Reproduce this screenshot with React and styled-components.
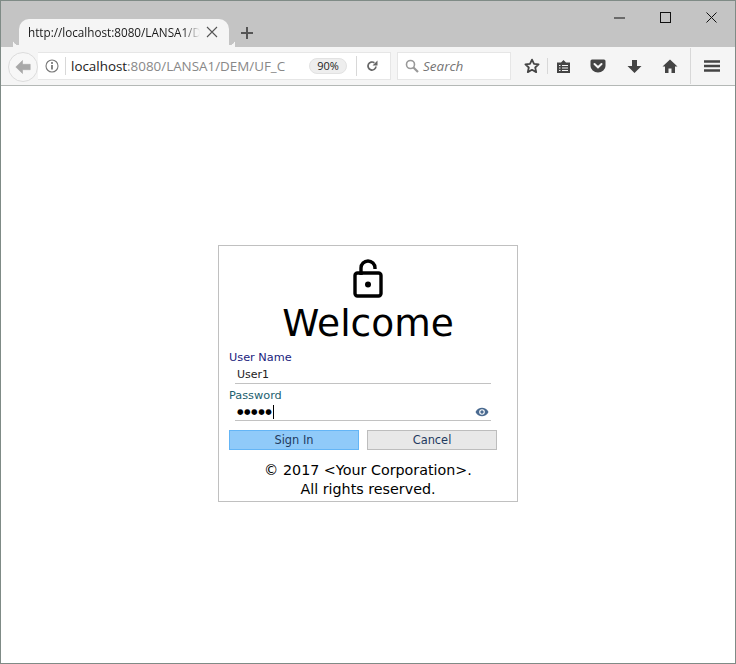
import React from "react";
import styled, { createGlobalStyle } from "styled-components";

const Global = createGlobalStyle`
  html, body {
    margin: 0;
    padding: 0;
    background: #fff;
  }
`;

const Frame = styled.div`
  width: 736px;
  height: 664px;
  box-sizing: border-box;
  border: 1px solid #7f8b86;
  display: flex;
  flex-direction: column;
  overflow: hidden;
  font-family: "DejaVu Sans", Verdana, sans-serif;
`;

const TitleBar = styled.div`
  height: 46px;
  flex: none;
  background: #c4c4c4;
  display: flex;
  align-items: flex-end;
  padding-left: 18px;
  position: relative;
`;

const Tab = styled.div`
  width: 210px;
  height: 28px;
  box-sizing: border-box;
  background: #f5f5f5;
  border-radius: 10px 10px 0 0;
  padding: 0 11px 2px 9px;
  display: flex;
  align-items: center;
  justify-content: space-between;
  position: relative;
  font-family: "Open Sans", sans-serif;
  font-size: 11.7px;
  color: #1a1a1a;

  &::before,
  &::after {
    content: "";
    position: absolute;
    bottom: 0;
    width: 6px;
    height: 8px;
    background: radial-gradient(circle at 0 0, #c4c4c4 6px, #f5f5f5 6.5px);
  }
  &::before {
    left: -6px;
    transform: scaleX(-1);
  }
  &::after {
    right: -6px;
  }
`;

const TabTitle = styled.span`
  width: 176px;
  white-space: nowrap;
  -webkit-mask-image: linear-gradient(to right, #000 155px, transparent 172px);
  mask-image: linear-gradient(to right, #000 155px, transparent 172px);
`;

const NewTab = styled.div`
  margin: 0 0 7px 11px;
  height: 14px;
  display: flex;
`;

const WindowControls = styled.div`
  position: absolute;
  top: 11px;
  right: 18px;
  display: flex;
  gap: 35px;
`;

const Toolbar = styled.div`
  height: 39px;
  flex: none;
  box-sizing: border-box;
  background: #f5f5f5;
  border-bottom: 1px solid #b4b8b6;
  display: flex;
  align-items: flex-start;
  padding: 5px 0 0 7px;
`;

const UrlBar = styled.div`
  width: 353px;
  height: 28px;
  box-sizing: border-box;
  background: #fff;
  border: 1px solid #e6e6e6;
  border-left: none;
  display: flex;
  align-items: center;
`;

const BackButton = styled.div`
  width: 30px;
  height: 30px;
  box-sizing: border-box;
  flex: none;
  border: 1px solid #dcdcdc;
  border-radius: 50%;
  background: #f7f7f7;
  display: flex;
  align-items: center;
  justify-content: center;
`;

const InfoIcon = styled.div`
  margin-left: 7px;
  display: flex;
`;

const Divider = styled.div`
  width: 1px;
  height: ${(p) => p.$h || 18}px;
  background: #d8d8d8;
  flex: none;
  margin: ${(p) => p.$m || "0"};
`;

const Url = styled.div`
  width: 214px;
  margin-left: 5px;
  font-family: "Open Sans", sans-serif;
  font-size: 13.4px;
  color: #888;
  white-space: nowrap;
  span {
    color: #222;
  }
`;

const Zoom = styled.div`
  width: 38px;
  height: 16px;
  margin-left: 24px;
  box-sizing: border-box;
  border-radius: 8px;
  background: #eeeeee;
  border: 1px solid #e2e2e2;
  font-family: "Open Sans", sans-serif;
  font-size: 11px;
  line-height: 14px;
  text-align: center;
  color: #222;
`;

const Reload = styled.div`
  margin-left: 9px;
  display: flex;
`;

const SearchBox = styled.div`
  width: 114px;
  height: 28px;
  margin-left: 6px;
  box-sizing: border-box;
  background: #fff;
  border: 1px solid #e6e6e6;
  display: flex;
  align-items: center;
  gap: 4px;
  padding-left: 7px;
  font-family: "Open Sans", sans-serif;
  font-style: italic;
  font-size: 13.5px;
  color: #757575;
`;

const ToolIcons = styled.div`
  display: flex;
  align-items: center;
  height: 28px;
`;

const ToolIcon = styled.div`
  display: flex;
  align-items: center;
  justify-content: center;
  width: 16px;
  margin-left: ${(p) => p.$ml}px;
`;

const Content = styled.div`
  flex: 1;
  background: #fff;
  padding: 159px 0 0 217px;
`;

const Card = styled.div`
  width: 300px;
  height: 257px;
  box-sizing: border-box;
  border: 1px solid #c0c0c0;
  padding: 12px 10px 0;
  display: flex;
  flex-direction: column;
`;

const Lock = styled.div`
  display: flex;
  justify-content: center;
  height: 40px;
`;

const Title = styled.h1`
  margin: 0;
  font-weight: 400;
  font-size: 37.5px;
  line-height: 50px;
  text-align: center;
  color: #000;
`;

const Label = styled.div`
  font-size: 11.3px;
  line-height: 14px;
  color: ${(p) => p.$color};
  margin-top: ${(p) => p.$mt}px;
`;

const Field = styled.div`
  width: 256px;
  height: ${(p) => p.$h}px;
  margin-left: 6px;
  box-sizing: border-box;
  border-bottom: 1px solid #c2c2c2;
  padding-left: 2px;
  display: flex;
  align-items: center;
  font-size: 11px;
  color: #222;
`;

const Dots = styled.span`
  font-size: 7.5px;
  letter-spacing: 0.5px;
  padding-right: 1px;
  color: #000;
  border-right: 1px solid #000;
  line-height: 14px;
  height: 14px;
`;

const Eye = styled.div`
  margin-left: auto;
  margin-right: 2px;
  display: flex;
`;

const Buttons = styled.div`
  display: flex;
  gap: 8px;
  margin-top: 9px;
`;

const Button = styled.button`
  width: 130px;
  height: 20px;
  padding: 0;
  box-sizing: border-box;
  border: 1px solid ${(p) => (p.$primary ? "#64b5f6" : "#bdbdbd")};
  background: ${(p) => (p.$primary ? "#90caf9" : "#e8e8e8")};
  font-family: inherit;
  font-size: 11.4px;
  color: #1f3a5f;
`;

const Footer = styled.div`
  margin-top: 11px;
  font-size: 14.3px;
  line-height: 19px;
  text-align: center;
  color: #000;
`;

function Glyph({ w = 16, h = 16, children, ...rest }) {
  return (
    <svg width={w} height={h} viewBox={`0 0 ${w} ${h}`} {...rest}>
      {children}
    </svg>
  );
}

export default function App() {
  return (
    <>
      <Global />
      <Frame>
        <TitleBar>
          <Tab>
            <TabTitle>http://localhost:8080/LANSA1/D</TabTitle>
            <Glyph w={12} h={12}>
              <path d="M1 1l10 10M11 1L1 11" stroke="#555" strokeWidth="1.1" fill="none" />
            </Glyph>
          </Tab>
          <NewTab>
            <Glyph w={14} h={14}>
              <path d="M7 1v12M1 7h12" stroke="#555" strokeWidth="2" fill="none" />
            </Glyph>
          </NewTab>
          <WindowControls>
            <Glyph w={11} h={11}>
              <path d="M0 6h11" stroke="#111" strokeWidth="1" />
            </Glyph>
            <Glyph w={11} h={11}>
              <rect x="0.5" y="0.5" width="10" height="10" stroke="#111" fill="none" />
            </Glyph>
            <Glyph w={11} h={11}>
              <path d="M0.5 0.5l10 10M10.5 0.5l-10 10" stroke="#111" fill="none" />
            </Glyph>
          </WindowControls>
        </TitleBar>
        <Toolbar>
          <BackButton>
            <Glyph w={16} h={14}>
              <path d="M7.500 0.500L0.800 7l6.700 6.500V9.700H15.200V4.300H7.500z" fill="#a8a8a8" stroke="#a8a8a8" strokeWidth="0.6" strokeLinejoin="round" />
            </Glyph>
          </BackButton>
          <UrlBar>
            <InfoIcon>
              <Glyph w={14} h={14}>
                <circle cx="7" cy="7" r="6" stroke="#777" strokeWidth="1.1" fill="none" />
                <path d="M7 6v4.5" stroke="#666" strokeWidth="1.6" />
                <circle cx="7" cy="4" r="1" fill="#666" />
              </Glyph>
            </InfoIcon>
            <Divider $m="0 0 0 6px" />
            <Url>
              <span>localhost</span>:8080/LANSA1/DEM/UF_C
            </Url>
            <Zoom>90%</Zoom>
            <Divider $m="0 0 0 9px" $h={20} />
            <Reload>
              <Glyph w={12} h={12}>
                <path d="M10 6.5A4 4 0 1 1 8.4 2.8" stroke="#666" strokeWidth="1.7" fill="none" />
                <path d="M11.5 0.5v5h-5z" fill="#666" />
              </Glyph>
            </Reload>
          </UrlBar>
          <SearchBox>
            <Glyph w={14} h={14}>
              <circle cx="5.5" cy="5.5" r="4" stroke="#999" strokeWidth="1.6" fill="none" />
              <path d="M8.5 8.5l4.5 4.5" stroke="#999" strokeWidth="2.2" />
            </Glyph>
            Search
          </SearchBox>
          <ToolIcons>
            <ToolIcon $ml={13}>
              <Glyph w={16} h={16}>
                <path d="M8 1.6l2 4.3 4.6.5-3.4 3.1 1 4.6L8 11.8l-4.2 2.3 1-4.6L1.4 6.4 6 5.9z" stroke="#444" strokeWidth="1.8" strokeLinejoin="round" fill="none" />
              </Glyph>
            </ToolIcon>
            <Divider $m="0 0 0 7px" $h={16} />
            <ToolIcon $ml={7}>
              <Glyph w={15} h={15}>
                <path d="M1 3.5h4L7.500 1 10 3.500h4V14H1z" fill="#444" />
                <path d="M3 6.500h1.500M6 6.500h6M3 9h1.500M6 9h6M3 11.500h1.500M6 11.500h6" stroke="#f5f5f5" strokeWidth="1.2" />
              </Glyph>
            </ToolIcon>
            <ToolIcon $ml={19}>
              <Glyph w={16} h={14}>
                <path d="M2 0.500h12A1.500 1.500 0 0 1 15.500 2v5a7.500 6.500 0 0 1-15 0V2A1.500 1.500 0 0 1 2 .5z" fill="#444" />
                <path d="M4.500 5L8 8.300 11.500 5" stroke="#f5f5f5" strokeWidth="2" strokeLinecap="round" fill="none" />
              </Glyph>
            </ToolIcon>
            <ToolIcon $ml={20}>
              <Glyph w={15} h={15}>
                <path d="M5 1h5v6h4.500L7.500 14 .5 7H5z" fill="#444" />
              </Glyph>
            </ToolIcon>
            <ToolIcon $ml={20}>
              <Glyph w={16} h={14}>
                <path d="M8 0.500L.5 7.500H3V14h3.500V9.500h3V14H13V7.500h2.500z" fill="#444" />
              </Glyph>
            </ToolIcon>
            <Divider $m="0 0 0 12px" $h={36} />
            <ToolIcon $ml={13}>
              <Glyph w={16} h={12}>
                <path d="M0 1.500h16M0 6h16M0 10.500h16" stroke="#444" strokeWidth="2.6" />
              </Glyph>
            </ToolIcon>
          </ToolIcons>
        </Toolbar>
        <Content>
          <Card>
            <Lock>
              <Glyph w={30} h={40}>
                <path d="M8 17v-7a7 7 0 0 1 14 0v1" stroke="#000" strokeWidth="3.4" fill="none" />
                <rect x="2" y="15" width="26" height="23" rx="2.5" stroke="#000" strokeWidth="3.4" fill="none" />
                <circle cx="15" cy="26.5" r="3" fill="#000" />
              </Glyph>
            </Lock>
            <Title>Welcome</Title>
            <Label $color="#1a237e" $mt={3}>User Name</Label>
            <Field $h={19}>User1</Field>
            <Label $color="#1b5e6e" $mt={5}>Password</Label>
            <Field $h={18}>
              <Dots>●●●●●</Dots>
              <Eye>
                <Glyph w={14} h={10}>
                  <path d="M0.500 5C2 2 4.400 .7 7 .7S12 2 13.500 5C12 8 9.600 9.300 7 9.300S2 8 0.500 5z" fill="#4a6a90" />
                  <circle cx="7" cy="5" r="2.800" fill="#fff" />
                  <circle cx="7" cy="5" r="1.700" fill="#4a6a90" />
                </Glyph>
              </Eye>
            </Field>
            <Buttons>
              <Button $primary>Sign In</Button>
              <Button>Cancel</Button>
            </Buttons>
            <Footer>
              © 2017 &lt;Your Corporation&gt;.
              <br />
              All rights reserved.
            </Footer>
          </Card>
        </Content>
      </Frame>
    </>
  );
}
